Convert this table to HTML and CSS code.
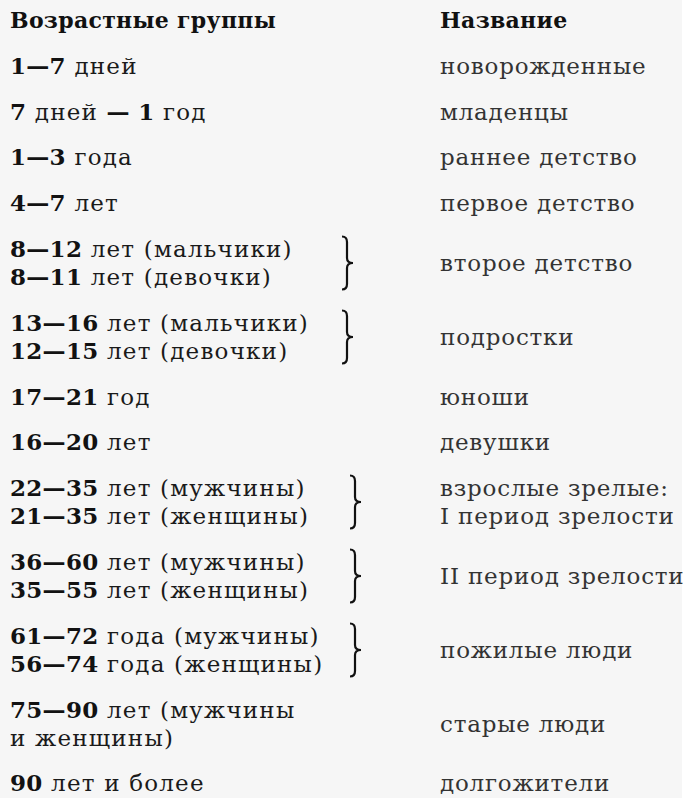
FILE: index.html
```html
<!DOCTYPE html>
<html lang="ru">
<head>
<meta charset="utf-8">
<title>Возрастные группы</title>
<link rel="stylesheet" href="styles.css">
</head>
<body>
<div class="sheet">
  <div class="row head">
    <div class="age">Возрастные группы</div>
    <div class="brace"></div>
    <div class="name">Название</div>
  </div>
  <div class="row">
    <div class="age"><b>1—7</b> дней</div>
    <div class="brace"></div>
    <div class="name">новорожденные</div>
  </div>
  <div class="row">
    <div class="age"><b>7</b> дней <b>— 1</b> год</div>
    <div class="brace"></div>
    <div class="name">младенцы</div>
  </div>
  <div class="row">
    <div class="age"><b>1—3</b> года</div>
    <div class="brace"></div>
    <div class="name">раннее детство</div>
  </div>
  <div class="row">
    <div class="age"><b>4—7</b> лет</div>
    <div class="brace"></div>
    <div class="name">первое детство</div>
  </div>
  <div class="row">
    <div class="age"><b>8—12</b> лет (мальчики)<br><b>8—11</b> лет (девочки)</div>
    <div class="brace"><svg width="22" height="56" viewBox="0 0 22 56"><path d="M2 1.5 Q7 1.5 7 7 L7 23 Q7 28 13 28 Q7 28 7 33 L7 49 Q7 54.5 2 54.5" fill="none" stroke="#111" stroke-width="2.2"/></svg></div>
    <div class="name">второе детство</div>
  </div>
  <div class="row">
    <div class="age"><b>13—16</b> лет (мальчики)<br><b>12—15</b> лет (девочки)</div>
    <div class="brace"><svg width="22" height="56" viewBox="0 0 22 56"><path d="M2 1.5 Q7 1.5 7 7 L7 23 Q7 28 13 28 Q7 28 7 33 L7 49 Q7 54.5 2 54.5" fill="none" stroke="#111" stroke-width="2.2"/></svg></div>
    <div class="name">подростки</div>
  </div>
  <div class="row">
    <div class="age"><b>17—21</b> год</div>
    <div class="brace"></div>
    <div class="name">юноши</div>
  </div>
  <div class="row">
    <div class="age"><b>16—20</b> лет</div>
    <div class="brace"></div>
    <div class="name">девушки</div>
  </div>
  <div class="row">
    <div class="age"><b>22—35</b> лет (мужчины)<br><b>21—35</b> лет (женщины)</div>
    <div class="brace shift"><svg width="22" height="56" viewBox="0 0 22 56"><path d="M2 1.5 Q7 1.5 7 7 L7 23 Q7 28 13 28 Q7 28 7 33 L7 49 Q7 54.5 2 54.5" fill="none" stroke="#111" stroke-width="2.2"/></svg></div>
    <div class="name">взрослые зрелые:<br>I период зрелости</div>
  </div>
  <div class="row">
    <div class="age"><b>36—60</b> лет (мужчины)<br><b>35—55</b> лет (женщины)</div>
    <div class="brace shift"><svg width="22" height="56" viewBox="0 0 22 56"><path d="M2 1.5 Q7 1.5 7 7 L7 23 Q7 28 13 28 Q7 28 7 33 L7 49 Q7 54.5 2 54.5" fill="none" stroke="#111" stroke-width="2.2"/></svg></div>
    <div class="name">II период зрелости</div>
  </div>
  <div class="row">
    <div class="age"><b>61—72</b> года (мужчины)<br><b>56—74</b> года (женщины)</div>
    <div class="brace shift"><svg width="22" height="56" viewBox="0 0 22 56"><path d="M2 1.5 Q7 1.5 7 7 L7 23 Q7 28 13 28 Q7 28 7 33 L7 49 Q7 54.5 2 54.5" fill="none" stroke="#111" stroke-width="2.2"/></svg></div>
    <div class="name">пожилые люди</div>
  </div>
  <div class="row">
    <div class="age"><b>75—90</b> лет (мужчины<br>и женщины)</div>
    <div class="brace"></div>
    <div class="name">старые люди</div>
  </div>
  <div class="row">
    <div class="age"><b>90</b> лет и более</div>
    <div class="brace"></div>
    <div class="name">долгожители</div>
  </div>
</div>
</body>
</html>
```

FILE: styles.css
```css
html, body {
  margin: 0;
  padding: 0;
  background: #ffffff;
}

.sheet {
  width: 682px;
  height: 798px;
  box-sizing: border-box;
  background: #f6f6f6;
  padding: 6px 0 0 10px;
  display: flex;
  flex-direction: column;
  gap: 17.8px;
  font-family: "DejaVu Serif", "Liberation Serif", serif;
  font-size: 23px;
  letter-spacing: 0.8px;
  line-height: 28px;
  color: #2a2a2a;
}

.row {
  display: grid;
  grid-template-columns: 330px 100px 1fr;
  align-items: center;
}

.age {
  color: #1a1a1a;
  white-space: nowrap;
  letter-spacing: 1.2px;
}

.age b {
  font-weight: bold;
  color: #121212;
  letter-spacing: 0.3px;
}

.brace {
  display: flex;
  align-items: center;
}

.brace svg {
  display: block;
}

.brace.shift {
  padding-left: 8px;
}

.name {
  color: #333333;
  white-space: nowrap;
}

.head .age,
.head .name {
  font-weight: bold;
  font-size: 22px;
  letter-spacing: 0.3px;
  color: #111111;
}
```
